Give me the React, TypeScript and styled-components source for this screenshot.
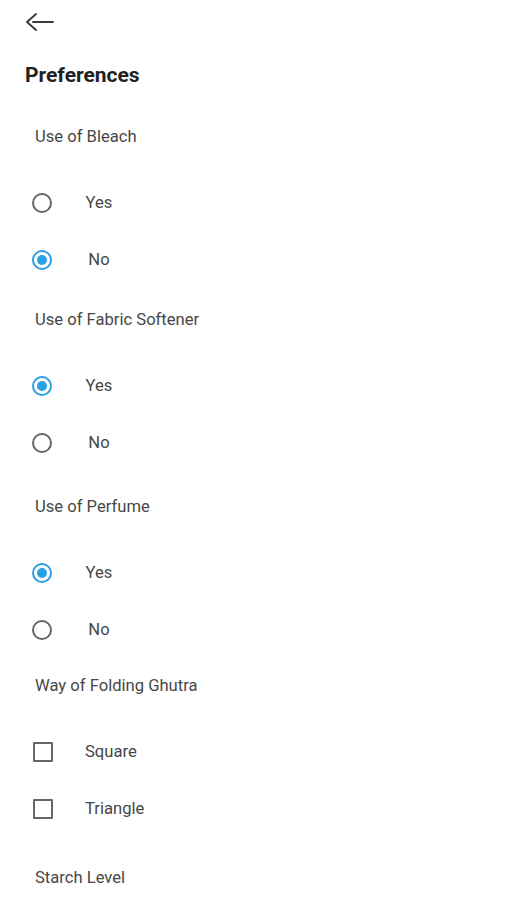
import React from "react";
import styled, { createGlobalStyle } from "styled-components";

const Global = createGlobalStyle`
  html, body { margin: 0; padding: 0; background: #ffffff; }
  body { font-family: Roboto, "Liberation Sans", Arial, sans-serif; }
`;

const Page = styled.div`
  width: 507px;
  min-height: 900px;
  background: #ffffff;
  display: flex;
  flex-direction: column;
`;

const Header = styled.div`
  height: 44px;
  display: flex;
  align-items: center;
  padding-left: 25px;
`;

const BackButton = styled.button`
  border: none;
  background: transparent;
  padding: 0;
  width: 32px;
  height: 24px;
  display: flex;
  align-items: center;
  justify-content: flex-start;
  cursor: pointer;
`;

const Title = styled.h1`
  margin: 19px 0 0 25px;
  font-size: 21px;
  line-height: 24px;
  font-weight: 700;
  color: #222222;
`;

const Group = styled.section<{ $top: number }>`
  margin-top: ${(p) => p.$top}px;
  display: flex;
  flex-direction: column;
`;

const GroupLabel = styled.div`
  padding-left: 35px;
  font-size: 16.6px;
  line-height: 20px;
  color: #474747;
  margin-bottom: 27px;
`;

const OptionRow = styled.label`
  height: 57px;
  display: flex;
  align-items: center;
  padding-left: 32px;
  gap: 33px;
  font-size: 16.6px;
  color: #474747;
`;

const OptionText = styled.span<{ $centered: boolean }>`
  display: inline-block;
  min-width: ${(p) => (p.$centered ? "28px" : "0")};
  text-align: ${(p) => (p.$centered ? "center" : "left")};
`;

const RadioOuter = styled.span<{ $checked: boolean }>`
  box-sizing: border-box;
  width: 20px;
  height: 20px;
  border-radius: 50%;
  border: 2px solid ${(p) => (p.$checked ? "#2a9fe3" : "#666666")};
  display: flex;
  align-items: center;
  justify-content: center;
  flex: none;
`;

const RadioDot = styled.span`
  width: 10px;
  height: 10px;
  border-radius: 50%;
  background: #2a9fe3;
`;

const CheckBox = styled.span`
  box-sizing: border-box;
  width: 20px;
  height: 20px;
  border: 2px solid #666666;
  border-radius: 1px;
  margin-left: 1px;
  margin-right: -1px;
  flex: none;
`;

type Opt = { label: string; checked: boolean };
type GroupData = { title: string; kind: "radio" | "check"; top: number; options: Opt[] };

const groups: GroupData[] = [
  { title: "Use of Bleach", kind: "radio", top: 40, options: [{ label: "Yes", checked: false }, { label: "No", checked: true }] },
  { title: "Use of Fabric Softener", kind: "radio", top: 22, options: [{ label: "Yes", checked: true }, { label: "No", checked: false }] },
  { title: "Use of Perfume", kind: "radio", top: 26, options: [{ label: "Yes", checked: true }, { label: "No", checked: false }] },
  { title: "Way of Folding Ghutra", kind: "check", top: 18, options: [{ label: "Square", checked: false }, { label: "Triangle", checked: false }] },
];

const BackArrow = () => (
  <svg width="30" height="20" viewBox="0 0 30 20" fill="none" stroke="#3a3a3a" strokeWidth="1.9" strokeLinecap="round" strokeLinejoin="round">
    <path d="M11 2 L2 10 L11 18" />
    <path d="M8 10 H28" />
  </svg>
);

export default function App() {
  return (
    <Page>
      <Global />
      <Header>
        <BackButton aria-label="Back">
          <BackArrow />
        </BackButton>
      </Header>
      <Title>Preferences</Title>
      {groups.map((g) => (
        <Group key={g.title} $top={g.top}>
          <GroupLabel>{g.title}</GroupLabel>
          {g.options.map((o) => (
            <OptionRow key={o.label}>
              {g.kind === "radio" ? (
                <RadioOuter $checked={o.checked}>{o.checked && <RadioDot />}</RadioOuter>
              ) : (
                <CheckBox />
              )}
              <OptionText $centered={g.kind === "radio"}>{o.label}</OptionText>
            </OptionRow>
          ))}
        </Group>
      ))}
      <Group $top={31}>
        <GroupLabel>Starch Level</GroupLabel>
      </Group>
    </Page>
  );
}
